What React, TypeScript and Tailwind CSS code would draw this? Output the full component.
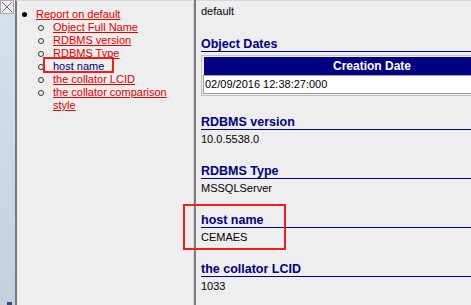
import * as React from "react";

const links = [
  { label: "Object Full Name" },
  { label: "RDBMS version" },
  { label: "RDBMS Type" },
  { label: "host name", current: true },
  { label: "the collator LCID" },
  { label: "the collator comparison style" },
];

const props = [
  { title: "RDBMS version", value: "10.0.5538.0" },
  { title: "RDBMS Type", value: "MSSQLServer" },
  { title: "host name", value: "CEMAES" },
  { title: "the collator LCID", value: "1033" },
];

function SectionTitle({ text }: { text: string }) {
  return (
    <div className="border-b border-[#000080] text-[12.5px] leading-[14px] font-bold text-[#000080] whitespace-nowrap">
      {text}
    </div>
  );
}

export default function App() {
  return (
    <div className="relative flex w-[471px] h-[305px] overflow-hidden bg-[#eeeeee] font-['Liberation_Sans',Arial,sans-serif] text-[11px] leading-[13px] text-black">
      {/* side strip */}
      <div className="flex flex-col w-[15px] shrink-0">
        <div className="w-[14px] h-[14px] bg-[#f0f0f0] border border-[#a8a8a8]">
          <svg width="12" height="12" viewBox="0 0 12 12">
            <path d="M1 1 L11 11 M11 1 L1 11" stroke="#6a6a6a" strokeWidth="1" />
          </svg>
        </div>
        <div className="flex-1 bg-gradient-to-b from-[#d5e1ed] to-[#c3d0de]" />
      </div>

      {/* left pane: contents */}
      <div className="w-[178px] shrink-0 border-l-2 border-[#787878] border-t border-t-[#d8d8d8] pt-[7px]">
        <div className="flex items-center h-[13px] pl-[5px]">
          <span className="w-[5px] h-[5px] rounded-full bg-black" />
          <a className="ml-[9px] text-[#e00000] underline whitespace-nowrap">Report on default</a>
        </div>
        {links.map((l) => (
          <div key={l.label} className="flex items-start pl-[21px]">
            <span className="mt-[3.5px] w-[6px] h-[6px] rounded-full border-[1.5px] border-[#333] shrink-0" />
            <div className="ml-[9px] w-[118px]">
              <a className={l.current ? "text-[#000080] underline" : "text-[#e00000] underline"}>{l.label}</a>
            </div>
          </div>
        ))}
      </div>

      {/* splitter */}
      <div className="w-px shrink-0 bg-[#dadada]" />
      <div className="w-[2px] shrink-0 bg-[#7a7a7a]" />

      {/* right pane: report */}
      <div className="flex-1 min-w-0 border-t border-[#d8d8d8] pt-[4px] pl-[5px]">
        <div>default</div>

        <div className="mt-[19px]">
          <SectionTitle text="Object Dates" />
        </div>
        <div className="mt-[3px] w-[341px] border border-[#c0c0c0] p-px">
          <div className="ml-px h-[18px] bg-[#000080] text-white font-bold text-[12px] leading-[18px] text-center">
            Creation Date
          </div>
          <div className="h-[19px] border border-[#a0a0a0] bg-white pl-px leading-[17px]">
            02/09/2016 12:38:27:000
          </div>
        </div>

        {props.map((p, i) => (
          <div key={p.title} className={i === 0 ? "mt-[19px]" : "mt-[18px]"}>
            <SectionTitle text={p.title} />
            <div className="mt-[3px]">{p.value}</div>
          </div>
        ))}
      </div>

      {/* highlight boxes */}
      <div className="absolute left-[43px] top-[57px] w-[71px] h-[16px] border-2 border-[#f01e1e]" />
      <div className="absolute left-[183px] top-[204px] w-[103px] h-[46px] border-2 border-[#f01e1e]" />
      <div className="absolute left-[7px] top-[302px] w-[5px] h-[3px] bg-[#3a4a7a]" />
    </div>
  );
}
